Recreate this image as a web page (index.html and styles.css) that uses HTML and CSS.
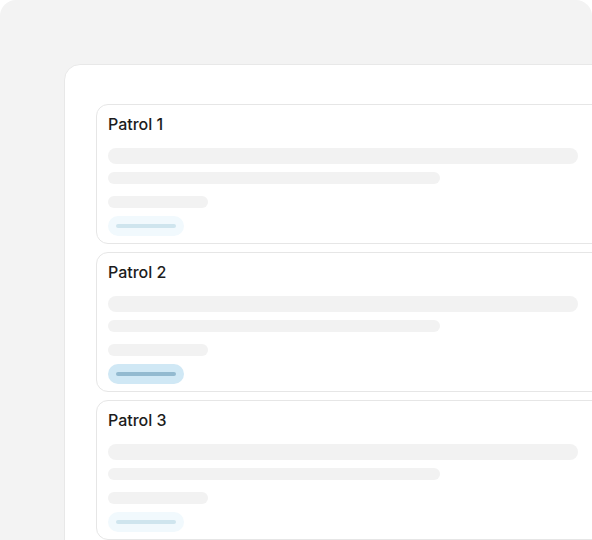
FILE: index.html
```html
<!DOCTYPE html>
<html>
<head>
    <title>Patrols</title>
    <link rel="stylesheet" href="styles.css">
</head>
<body>
    <div class="frame">
        <div class="panel">
            <div class="card">
                <div class="title">Patrol 1</div>
                <div class="bar bar-wide"></div>
                <div class="bar bar-mid"></div>
                <div class="bar bar-short"></div>
                <div class="pill"><span></span></div>
            </div>
            <div class="card">
                <div class="title">Patrol 2</div>
                <div class="bar bar-wide"></div>
                <div class="bar bar-mid"></div>
                <div class="bar bar-short"></div>
                <div class="pill active"><span></span></div>
            </div>
            <div class="card">
                <div class="title">Patrol 3</div>
                <div class="bar bar-wide"></div>
                <div class="bar bar-mid"></div>
                <div class="bar bar-short"></div>
                <div class="pill"><span></span></div>
            </div>
        </div>
    </div>
</body>
</html>
```

FILE: styles.css
```css
body {
    margin: 0;
    background: #ffffff;
    font-family: Inter, "Noto Sans", sans-serif;
}
.frame {
    height: 540px;
    background: #f3f3f3;
    border-radius: 16px 16px 0 0;
    padding: 64px 0 0 64px;
    box-sizing: border-box;
    overflow: hidden;
}
.panel {
    width: 620px;
    height: 600px;
    background: #ffffff;
    border: 1px solid #e8e8e8;
    border-radius: 16px 0 0 0;
    padding: 39px 0 0 31px;
    display: flex;
    flex-direction: column;
    gap: 8px;
}
.card {
    width: 560px;
    border: 1px solid #e6e6e6;
    border-radius: 12px;
    padding: 9px 0 7px 11px;
    display: flex;
    flex-direction: column;
    align-items: flex-start;
}
.title {
    font-size: 16px;
    line-height: 20px;
    font-weight: 500;
    color: #1c1c1c;
    margin-bottom: 14px;
}
.bar {
    background: #f2f2f2;
    border-radius: 8px;
    height: 12px;
}
.bar-wide {
    width: 470px;
    height: 16px;
    margin-bottom: 8px;
}
.bar-mid {
    width: 332px;
    margin-bottom: 12px;
}
.bar-short {
    width: 100px;
    margin-bottom: 8px;
}
.pill {
    width: 60px;
    padding: 8px;
    border-radius: 10px;
    background: #f1f9fd;
}
.pill span {
    display: block;
    height: 4px;
    border-radius: 2px;
    background: #cfe5ee;
}
.pill.active {
    background: #d0e8f5;
}
.pill.active span {
    background: #93bad0;
}
```
